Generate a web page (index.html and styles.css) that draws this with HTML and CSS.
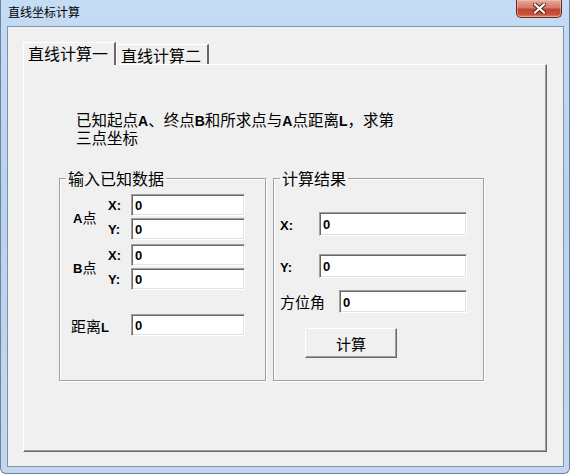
FILE: index.html
```html
<!DOCTYPE html>
<html lang="zh-CN">
<head>
  <meta charset="UTF-8">
  <title>直线坐标计算</title>
  <link rel="stylesheet" href="styles.css">
</head>
<body>

<div class="window">
  <div class="titlebar">
    <span class="title">直线坐标计算</span>
    <button class="close" title="关闭">
      <svg width="13" height="11" viewBox="0 0 13 11">
        <path d="M2 1.5 L11 9.5 M11 1.5 L2 9.5" stroke="#4a2018" stroke-width="4" stroke-linecap="square"/>
        <path d="M2 1.5 L11 9.5 M11 1.5 L2 9.5" stroke="#ffffff" stroke-width="2.2" stroke-linecap="square"/>
      </svg>
    </button>
  </div>

  <div class="client">
    <div class="tabs">
      <div class="tab active">直线计算一</div>
      <div class="tab">直线计算二</div>
    </div>

    <div class="panel">
      <p class="desc">已知起点<b>A</b>、终点<b>B</b>和所求点与<b>A</b>点距离<b>L</b>，求第<br>三点坐标</p>

      <div class="groups">
        <fieldset class="group known">
          <legend>输入已知数据</legend>

          <div class="point">
            <span class="pt-name"><b>A</b>点</span>
            <div class="coords">
              <div class="coord"><span class="axis">X:</span><input class="field" type="text" value="0"></div>
              <div class="coord"><span class="axis">Y:</span><input class="field" type="text" value="0"></div>
            </div>
          </div>

          <div class="point">
            <span class="pt-name"><b>B</b>点</span>
            <div class="coords">
              <div class="coord"><span class="axis">X:</span><input class="field" type="text" value="0"></div>
              <div class="coord"><span class="axis">Y:</span><input class="field" type="text" value="0"></div>
            </div>
          </div>

          <div class="dist">
            <span class="dist-label">距离<b>L</b></span>
            <input class="field" type="text" value="0">
          </div>
        </fieldset>

        <fieldset class="group result">
          <legend>计算结果</legend>

          <div class="res-row rx">
            <span class="res-label"><b>X:</b></span>
            <input class="field wide" type="text" value="0">
          </div>
          <div class="res-row ry">
            <span class="res-label"><b>Y:</b></span>
            <input class="field wide" type="text" value="0">
          </div>
          <div class="res-row rang">
            <span class="res-label ang">方位角</span>
            <input class="field ang-field" type="text" value="0">
          </div>
          <button class="calc">计算</button>
        </fieldset>
      </div>
    </div>
  </div>
</div>

</body>
</html>
```

FILE: styles.css
```css
html, body {
  margin: 0;
  width: 570px;
  height: 474px;
  overflow: hidden;
}

body {
  font-family: "Noto Sans CJK SC", "Liberation Sans", sans-serif;
  color: #000;
}

b {
  font-family: "Liberation Sans", sans-serif;
  font-weight: bold;
}

.window {
  box-sizing: border-box;
  width: 570px;
  height: 474px;
  padding: 0 5px 6px 6px;
  display: flex;
  flex-direction: column;
  background: linear-gradient(to bottom, #c5dcf5 0%, #b9d2ed 40%, #c2d8ef 100%);
  border-left: 1px solid #6d8199;
  border-right: 1px solid #6d8199;
  border-bottom: 1px solid #6d8199;
  border-radius: 0 0 6px 6px;
}

.titlebar {
  height: 26px;
  display: flex;
  align-items: flex-start;
  justify-content: space-between;
}

.title {
  font-size: 12px;
  line-height: 14px;
  margin-top: 5px;
  margin-left: 1px;
}

.close {
  width: 46px;
  height: 18px;
  margin-right: 2px;
  padding: 0;
  border: 1px solid #6b2a20;
  border-top: none;
  border-radius: 0 0 5px 5px;
  background: linear-gradient(to bottom, #e6a89c 0%, #d4796a 45%, #c2432f 55%, #c9533e 85%, #e08870 100%);
  box-shadow: inset 0 0 0 1px rgba(255, 210, 200, 0.45);
  display: flex;
  align-items: center;
  justify-content: center;
}

.client {
  flex: 1;
  border: 1px solid #7f93a9;
  background: #f0f0f0;
  padding: 15px 16px 14px 15px;
  display: flex;
  flex-direction: column;
}

/* tabs */

.tabs {
  height: 22px;
  display: flex;
  align-items: flex-end;
}

.tab {
  box-sizing: border-box;
  height: 20px;
  font-size: 16px;
  line-height: 20px;
  padding: 0 6px 0 4px;
  border-top: 1px solid #fff;
  border-left: 1px solid #fff;
  border-right: 2px solid;
  border-right-color: #696969;
  background: #f0f0f0;
  white-space: nowrap;
}

.tab.active {
  height: 23px;
  margin-bottom: -1px;
  padding: 0 6px 0 4px;
  line-height: 20px;
  position: relative;
  z-index: 1;
}

.panel {
  flex: 1;
  border-top: 1px solid #fff;
  border-left: 1px solid #fff;
  border-right: 1px solid #696969;
  border-bottom: 1px solid #696969;
  box-shadow: inset -1px -1px 0 #a0a0a0;
  padding-left: 35px;
}

.desc {
  margin: 46px 0 0 17px;
  font-size: 15.5px;
  line-height: 16px;
}

.desc b {
  font-size: 14px;
}

/* group boxes */

.groups {
  display: flex;
  gap: 7px;
  margin-top: 24px;
}

.group {
  box-sizing: border-box;
  height: 212px;
  margin: 0;
  padding: 7px 0 0 6px;
  border: 1px solid #a0a0a0;
  box-shadow: 1px 1px 0 #fff, inset 1px 1px 0 #fff;
}

.known {
  width: 207px;
}

.result {
  width: 211px;
}

.group legend {
  font-size: 16px;
  line-height: 18px;
  padding: 0 2px;
}

.point {
  display: flex;
  align-items: center;
  margin-left: 7px;
}

.point + .point {
  margin-top: 4px;
}

.pt-name {
  width: 35px;
  font-size: 14px;
}

.pt-name b {
  font-size: 13px;
}

.coords {
  display: flex;
  flex-direction: column;
  gap: 2px;
}

.coord {
  display: flex;
  align-items: center;
}

.axis {
  width: 23px;
  font-family: "Liberation Sans", sans-serif;
  font-weight: bold;
  font-size: 13px;
}

.field {
  box-sizing: border-box;
  width: 114px;
  height: 22px;
  margin: 0;
  padding: 1px 0 0 3px;
  background: #fff;
  border-top: 1px solid #a0a0a0;
  border-left: 1px solid #a0a0a0;
  border-right: 1px solid #fff;
  border-bottom: 1px solid #fff;
  box-shadow: inset 1px 1px 0 #696969, inset -1px -1px 0 #e3e3e3;
  font-family: "Liberation Sans", sans-serif;
  font-weight: bold;
  font-size: 13px;
  color: #000;
  outline: none;
}

.dist {
  display: flex;
  align-items: center;
  margin-top: 24px;
  margin-left: 5px;
}

.dist-label {
  width: 60px;
  font-size: 15px;
}

.dist-label b {
  font-size: 13px;
}

/* result group */

.res-row {
  display: flex;
  align-items: center;
}

.rx {
  margin-top: 18px;
}

.ry {
  margin-top: 18px;
}

.rang {
  margin-top: 12px;
}

.res-label {
  width: 39px;
  font-size: 13px;
}

.res-label.ang {
  width: 59px;
  font-size: 15px;
}

.field.wide {
  width: 148px;
  height: 24px;
}

.field.ang-field {
  width: 128px;
  height: 23px;
}

.calc {
  width: 92px;
  height: 30px;
  margin: 15px 0 0 25px;
  padding: 0;
  background: #f0f0f0;
  border-top: 1px solid #fff;
  border-left: 1px solid #fff;
  border-right: 1px solid #696969;
  border-bottom: 1px solid #696969;
  box-shadow: inset -1px -1px 0 #a0a0a0;
  font-family: "Noto Sans CJK SC", sans-serif;
  font-size: 15px;
  color: #000;
}
```
